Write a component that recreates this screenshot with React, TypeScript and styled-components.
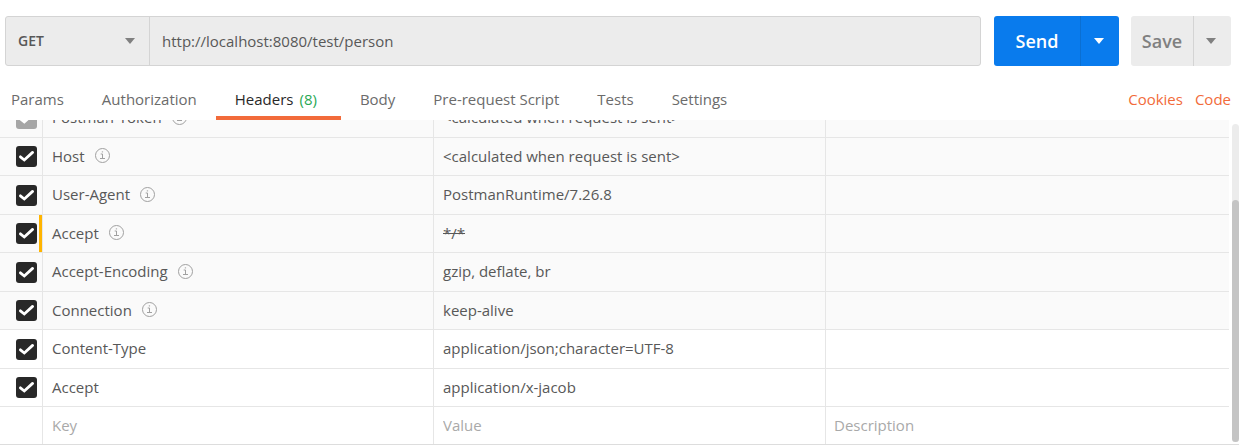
import React from "react";
import styled, { createGlobalStyle, css } from "styled-components";

const GlobalStyle = createGlobalStyle`
  *, *::before, *::after { box-sizing: border-box; }
  body {
    margin: 0;
    background: #fff;
    color: #585858;
    font: 15px/20px "Open Sans", "Noto Sans", sans-serif;
  }
  button, input, select { font: inherit; color: inherit; }
`;

const Page = styled.main`
  display: flex;
  flex-direction: column;
  height: 100vh;
  padding-bottom: 3px;
  overflow: hidden;
`;

const RequestBar = styled.form`
  display: flex;
  flex: none;
  gap: 12px;
  height: 50px;
  margin: 16px 8px 0 5px;
`;

const UrlGroup = styled.div`
  display: flex;
  flex: 1;
  min-width: 0;
  margin-right: 1px;
  border: 1px solid #d4d4d4;
  border-radius: 3px;
  background: #ececec;
`;

const MethodBox = styled.div`
  display: flex;
  flex: none;
  align-items: center;
  width: 144px;
  padding-right: 14px;
  border-right: 1px solid #d4d4d4;
`;

const MethodSelect = styled.select`
  flex: 1;
  height: 100%;
  padding: 0 12px;
  border: 0;
  background: none;
  appearance: none;
  font-size: 14px;
  font-weight: 600;
`;

const UrlInput = styled.input`
  flex: 1;
  min-width: 0;
  padding: 0 12px;
  border: 0;
  background: none;
`;

const SplitButton = styled.div<{ $primary?: boolean }>`
  display: flex;
  flex: none;
  overflow: hidden;
  border-radius: 3px;
  background: ${(p) => (p.$primary ? "#097bed" : "#ececec")};
  color: ${(p) => (p.$primary ? "#fff" : "#808080")};
`;

const MainAction = styled.button<{ $wide?: boolean }>`
  width: ${(p) => (p.$wide ? 86 : 62)}px;
  padding: 0;
  border: 0;
  background: none;
  font-size: 18px;
  font-weight: 600;
`;

const MenuAction = styled.button<{ $divider: string; $wide?: boolean }>`
  display: flex;
  align-items: center;
  justify-content: center;
  width: ${(p) => (p.$wide ? 39 : 38)}px;
  padding: 0 3px 0 0;
  border: 0;
  border-left: 1px solid ${(p) => p.$divider};
  background: none;
`;

const TabBar = styled.nav`
  display: flex;
  flex: none;
  justify-content: space-between;
  height: 54px;
  padding: 14px 8px 0 0;
`;

const TabList = styled.div`
  display: flex;
  margin-left: -8px;
`;

const Tab = styled.button<{ $active?: boolean }>`
  display: flex;
  gap: 6px;
  height: 40px;
  padding: 9px 19px 0;
  border: 0;
  border-bottom: 4px solid transparent;
  background: none;
  color: #6b6b6b;
  white-space: nowrap;
  ${(p) =>
    p.$active &&
    css`
      border-bottom-color: #f26b3a;
      color: #282828;
    `}
`;

const Count = styled.span`
  padding-right: 5px;
  color: #29a854;
`;

const TabLinks = styled.div`
  display: flex;
  gap: 12px;
  padding-top: 9px;
`;

const TextLink = styled.a`
  color: #f26b3a;
  text-decoration: none;
`;

const TableView = styled.section`
  display: flex;
  flex: 1;
  gap: 3px;
  min-height: 0;
  border-bottom: 1px solid #ddd;
`;

const TableViewport = styled.div`
  display: flex;
  flex: 1;
  flex-direction: column;
  justify-content: flex-end;
  min-width: 0;
  overflow: hidden;
`;

const HeadersTable = styled.table`
  display: block;
  flex: none;
`;

const Body = styled.tbody`
  display: block;
`;

const Row = styled.tr<{ $auto?: boolean }>`
  display: grid;
  grid-template-columns: 43px 391fr 392fr 403fr;
  height: 38px;
  background: ${(p) => (p.$auto ? "#fafafa" : "#fff")};
  border-bottom: 1px solid #e6e6e6;
  &:nth-child(odd) {
    height: 39px;
  }
  &:last-child {
    height: 37px;
    border-bottom: 0;
  }
`;

const Cell = styled.td`
  display: flex;
  align-items: center;
  gap: 10px;
  min-width: 0;
  padding: 0 9px 2px;
  border-right: 1px solid #e6e6e6;
  white-space: nowrap;
  &:last-child {
    border-right: 0;
    padding-left: 8px;
  }
`;

const CheckCell = styled(Cell)<{ $overridden?: boolean }>`
  position: relative;
  padding: 0 0 0 16px;
  ${(p) =>
    p.$overridden &&
    css`
      &::after {
        content: "";
        position: absolute;
        top: 0;
        right: 0;
        bottom: 0;
        width: 3px;
        background: #ffb400;
      }
    `}
`;

const CheckBoxFrame = styled.span`
  display: grid;
  width: 21px;
  height: 21px;
  & > * {
    grid-area: 1 / 1;
  }
`;

const CheckBox = styled.input`
  width: 21px;
  height: 21px;
  margin: 0;
  border-radius: 3px;
  background: #282828;
  appearance: none;
  &:disabled {
    background: #a6a6a6;
  }
`;

const CheckMark = styled.svg`
  z-index: 1;
  pointer-events: none;
`;

const Value = styled.span<{ $struck?: boolean }>`
  text-decoration: ${(p) => (p.$struck ? "line-through" : "none")};
`;

const CellInput = styled.input`
  width: 100%;
  padding: 0;
  border: 0;
  background: none;
  &::placeholder {
    color: #a9a9a9;
    opacity: 1;
  }
`;

const ScrollTrack = styled.div`
  display: flex;
  flex: none;
  align-items: flex-end;
  width: 7px;
  margin: 4px 0 2px;
  border-radius: 4px;
  background: #ececec;
`;

const ScrollThumb = styled.div`
  width: 100%;
  height: 76%;
  border-radius: 4px;
  background: #c4c4c4;
`;

const Caret = ({ color }: { color: string }) => (
  <svg width="10" height="6" viewBox="0 0 10 6" aria-hidden="true">
    <path d="M0 0h10L5 6z" fill={color} />
  </svg>
);

const InfoIcon = () => (
  <svg width="15" height="15" viewBox="0 0 15 15" fill="none" stroke="#a0a0a0" aria-hidden="true">
    <circle cx="7.5" cy="7.5" r="7" />
    <path d="M5.7 6h1.8v4.5M5 10.5h5M6.8 3.9h1.3" />
  </svg>
);

type Header = {
  name: string;
  value: string;
  auto?: boolean;
  disabled?: boolean;
  overridden?: boolean;
};

const headers: Header[] = [
  { name: "Postman-Token", value: "<calculated when request is sent>", auto: true, disabled: true },
  { name: "Host", value: "<calculated when request is sent>", auto: true },
  { name: "User-Agent", value: "PostmanRuntime/7.26.8", auto: true },
  { name: "Accept", value: "*/*", auto: true, overridden: true },
  { name: "Accept-Encoding", value: "gzip, deflate, br", auto: true },
  { name: "Connection", value: "keep-alive", auto: true },
  { name: "Content-Type", value: "application/json;character=UTF-8" },
  { name: "Accept", value: "application/x-jacob" },
];

const tabs = ["Params", "Authorization", "Headers", "Body", "Pre-request Script", "Tests", "Settings"];

const HeaderRow = ({ header, id }: { header: Header; id: string }) => (
  <Row $auto={header.auto}>
    <CheckCell $overridden={header.overridden}>
      <CheckBoxFrame>
        <CheckBox id={id} type="checkbox" defaultChecked disabled={header.disabled} />
        <CheckMark width="21" height="21" viewBox="0 0 21 21" fill="none" aria-hidden="true">
          <path d="M4.4 10.8L8.3 14L16.6 6.4" stroke="#fff" strokeWidth="2.8" strokeLinecap="round" />
        </CheckMark>
      </CheckBoxFrame>
    </CheckCell>
    <Cell>
      <label htmlFor={id}>{header.name}</label>
      {header.auto && <InfoIcon />}
    </Cell>
    <Cell>
      <Value $struck={header.overridden}>{header.value}</Value>
    </Cell>
    <Cell />
  </Row>
);

export default function App() {
  return (
    <>
      <GlobalStyle />
      <Page>
        <RequestBar onSubmit={(e) => e.preventDefault()}>
          <UrlGroup>
            <MethodBox>
              <MethodSelect aria-label="Request method" defaultValue="GET">
                <option>GET</option>
              </MethodSelect>
              <Caret color="#808080" />
            </MethodBox>
            <UrlInput aria-label="Request URL" defaultValue="http://localhost:8080/test/person" />
          </UrlGroup>
          <SplitButton $primary>
            <MainAction $wide type="submit">Send</MainAction>
            <MenuAction $wide $divider="#0a6fd2" type="button" aria-label="Send options">
              <Caret color="#fff" />
            </MenuAction>
          </SplitButton>
          <SplitButton>
            <MainAction type="button">Save</MainAction>
            <MenuAction $divider="#d4d4d4" type="button" aria-label="Save options">
              <Caret color="#808080" />
            </MenuAction>
          </SplitButton>
        </RequestBar>
        <TabBar>
          <TabList>
            {tabs.map((tab) => (
              <Tab key={tab} type="button" $active={tab === "Headers"}>
                {tab}
                {tab === "Headers" && <Count>(8)</Count>}
              </Tab>
            ))}
          </TabList>
          <TabLinks>
            <TextLink href="#cookies">Cookies</TextLink>
            <TextLink href="#code">Code</TextLink>
          </TabLinks>
        </TabBar>
        <TableView>
          <TableViewport>
            <HeadersTable>
              <Body>
                {headers.map((header, index) => (
                  <HeaderRow key={index} header={header} id={`header-${index}`} />
                ))}
                <Row>
                  <CheckCell />
                  <Cell><CellInput aria-label="Key" placeholder="Key" /></Cell>
                  <Cell><CellInput aria-label="Value" placeholder="Value" /></Cell>
                  <Cell><CellInput aria-label="Description" placeholder="Description" /></Cell>
                </Row>
              </Body>
            </HeadersTable>
          </TableViewport>
          <ScrollTrack>
            <ScrollThumb />
          </ScrollTrack>
        </TableView>
      </Page>
    </>
  );
}
